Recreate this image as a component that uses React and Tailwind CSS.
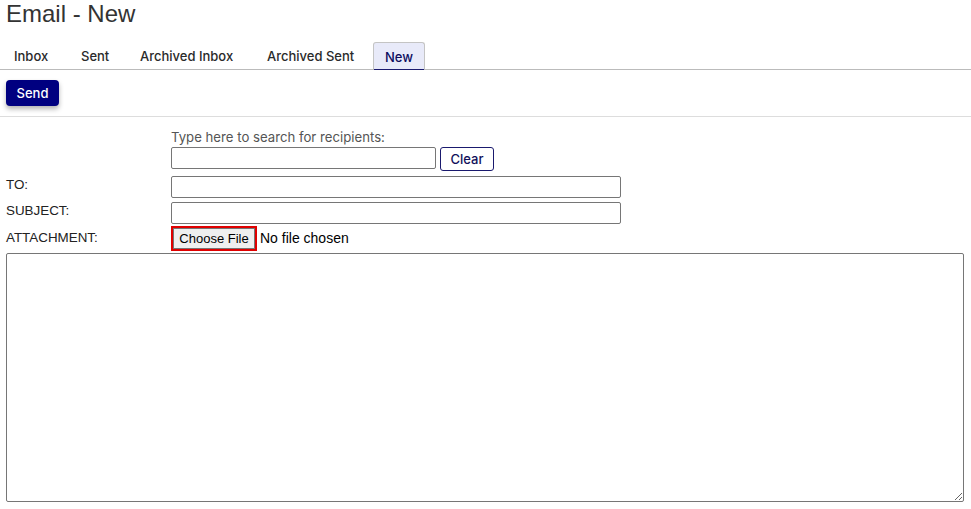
import React from 'react';

const tabs = [
  { label: 'Inbox', cls: 'w-[81px] pl-[14px]' },
  { label: 'Sent', cls: 'w-[59px]' },
  { label: 'Archived Inbox', cls: 'w-[127px]' },
  { label: 'Archived Sent', cls: 'w-[106px]' },
];

const App = () => {
  return (
    <div className="w-[971px] h-[509px] bg-white text-[#222] font-['Liberation_Sans',Arial,sans-serif] overflow-hidden">
      <h1 className="pl-[6px] h-[42px] text-[24px] leading-[28px] text-[#333] font-normal">Email - New</h1>

      <div className="flex items-end h-[28px] border-b border-[#bbb] font-['Inter',sans-serif] text-[13px] font-medium">
        {tabs.map((t) => (
          <div key={t.label} className={`${t.cls} h-full flex items-center pt-[3px] text-[#2a2a2a]`}>
            {t.label}
          </div>
        ))}
        <div className="w-[52px] h-full flex items-center justify-center pt-[3px] bg-[#e8eaf9] border border-b-0 border-[#c4c4c4] rounded-t-[3px] text-[#0d0d5e] relative">
          New
          <div className="absolute left-0 right-0 -bottom-px h-px bg-[#1a1a6e]" />
        </div>
      </div>

      <div className="px-[6px] pt-[10px] pb-[10px] border-b border-[#ddd]">
        <button className="w-[53px] h-[26px] pt-[1px] rounded-[4px] bg-[#000080] text-white text-[13px] font-['Inter',sans-serif] font-medium shadow-[0_3px_5px_rgba(0,0,0,0.3)]">
          Send
        </button>
      </div>

      <div className="pt-[12px] text-[13px]">
        <div className="flex">
          <div className="w-[171px]" />
          <div>
            <div className="font-['Inter',sans-serif] text-[13.2px] text-[#555] leading-[16px]">Type here to search for recipients:</div>
            <div className="flex items-start gap-[4px] mt-[2px]">
              <input className="w-[265px] h-[22px] border border-[#767676] rounded-[2px] px-1 outline-none" />
              <button className="w-[54px] h-[24px] pt-[1px] border border-[#1a1a6e] rounded-[3px] text-[#10105a] font-['Inter',sans-serif] font-medium text-[13px]">
                Clear
              </button>
            </div>
          </div>
        </div>

        <div className="flex items-center mt-[5px] h-[22px]">
          <div className="w-[171px] pl-[6px] pb-[3px] text-[13.4px] text-[#222]">TO:</div>
          <input className="w-[450px] h-[22px] border border-[#767676] rounded-[2px] px-1 outline-none" />
        </div>

        <div className="flex items-center mt-[4px] h-[22px]">
          <div className="w-[171px] pl-[6px] pb-[3px] text-[13.4px] text-[#222]">SUBJECT:</div>
          <input className="w-[450px] h-[22px] border border-[#767676] rounded-[2px] px-1 outline-none" />
        </div>

        <div className="flex items-center mt-[2px] h-[25px]">
          <div className="w-[171px] pl-[6px] text-[13.4px] text-[#222]">ATTACHMENT:</div>
          <div className="flex items-center">
            <div className="w-[86px] h-[25px] border-2 border-[#e00000] flex items-center justify-center">
              <span className="w-full h-full bg-[#efefef] border border-[#767676] flex items-center justify-center text-[13px] text-black">
                Choose File
              </span>
            </div>
            <span className="ml-[3px] text-[14px] text-black">No file chosen</span>
          </div>
        </div>

        <div className="pl-[6px] pr-[7px] mt-[2px]">
          <textarea className="block w-[958px] h-[249px] border border-[#767676] rounded-[2px] resize-y outline-none" />
        </div>
      </div>
    </div>
  );
};

export default App;
